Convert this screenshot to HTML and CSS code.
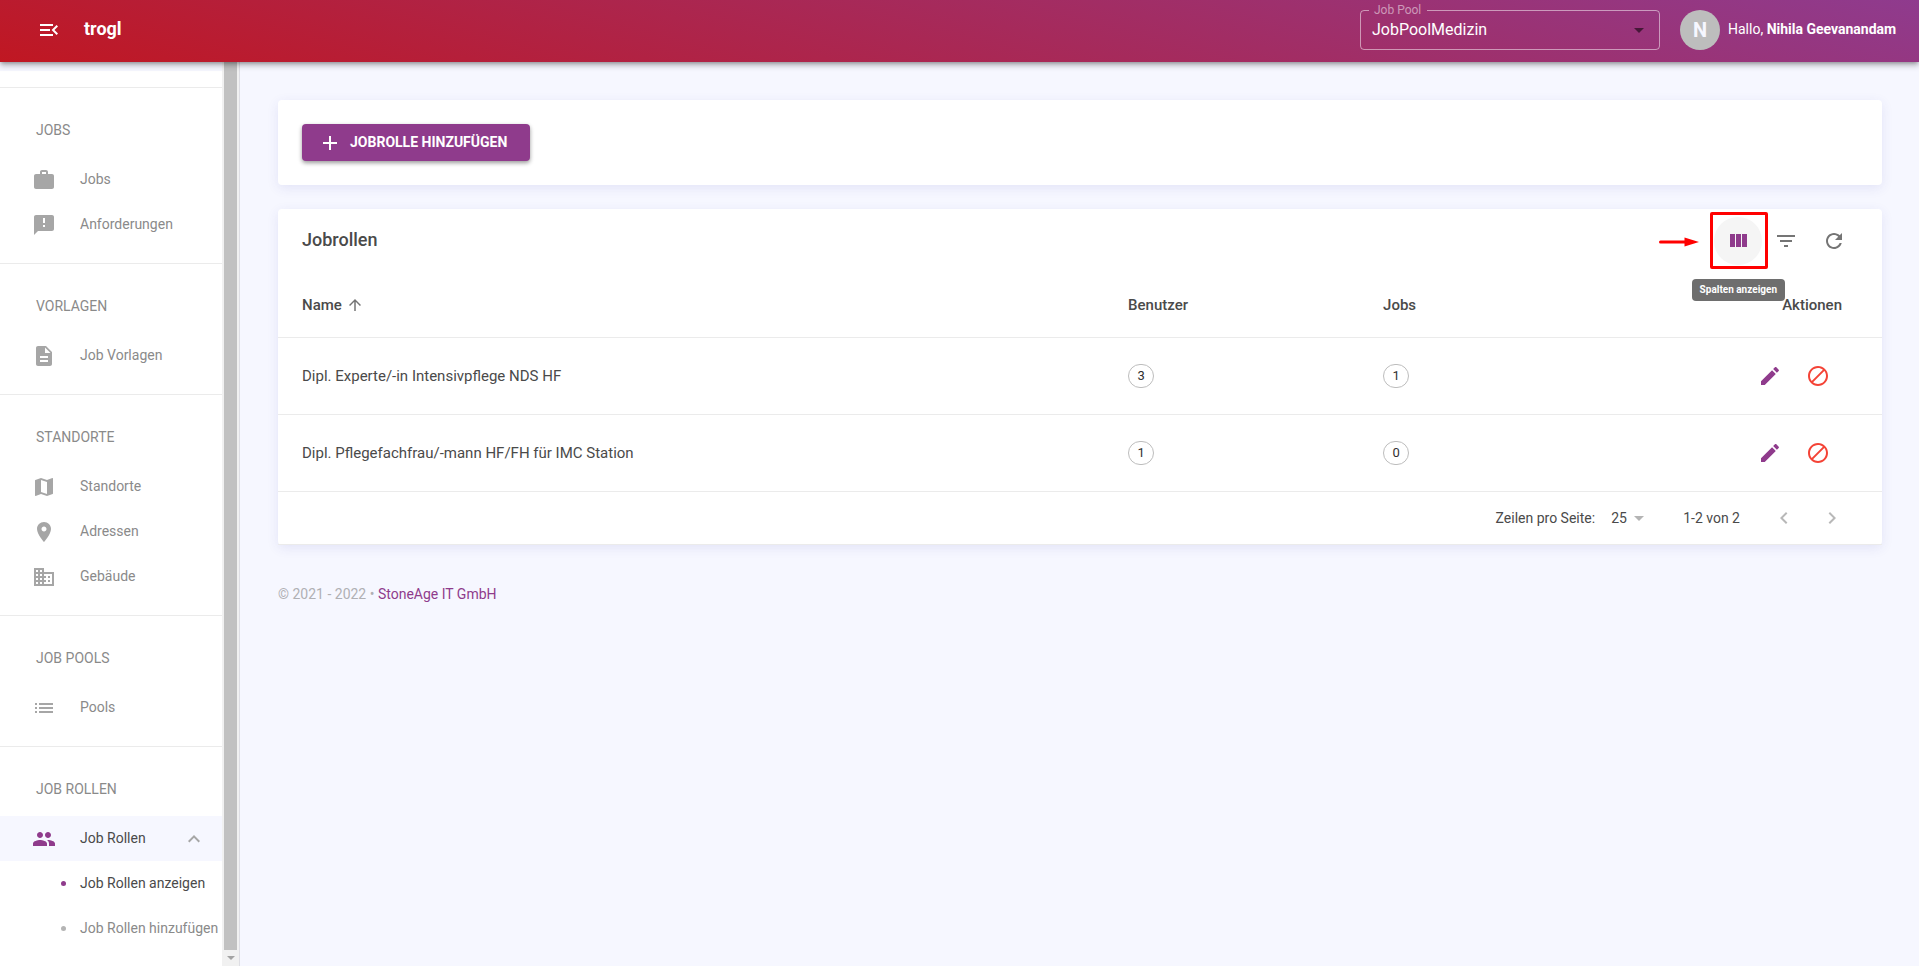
FILE: index.html
```html
<!DOCTYPE html>
<html lang="de">
<head>
<meta charset="utf-8">
<title>trogl – Jobrollen</title>
<link rel="stylesheet" href="styles.css">
</head>
<body>
<header class="topbar">
  <button class="menu-toggle" type="button" aria-label="Menü einklappen">
    <svg class="icon" viewBox="0 0 24 24"><path d="M3 18h13v-2H3v2zM3 13h10v-2H3v2zm0-7v2h13V6H3zm18 9.590L17.420 12 21 8.410 19.590 7l-5 5 5 5L21 15.590z"/></svg>
  </button>
  <a class="brand" href="#">trogl</a>
  <div class="topbar-right">
    <fieldset class="pool">
      <legend><label for="pool">Job Pool</label></legend>
      <div class="select-wrap">
        <select id="pool"><option>JobPoolMedizin</option></select>
        <svg class="icon caret" viewBox="0 0 24 24"><path d="M7 10l5 5 5-5z"/></svg>
      </div>
    </fieldset>
    <span class="avatar">N</span>
    <span class="greeting">Hallo, <strong>Nihila Geevanandam</strong></span>
  </div>
</header>
<div class="shell">
  <aside class="sidebar">
    <nav class="nav">
      <div class="section">
        <h2>Jobs</h2>
        <a href="#" class="item"><svg class="icon" viewBox="0 0 24 24"><path d="M20 6h-4V4c0-1.110-.89-2-2-2h-4c-1.110 0-2 .89-2 2v2H4c-1.110 0-1.990.89-1.990 2L2 19c0 1.110.89 2 2 2h16c1.110 0 2-.89 2-2V8c0-1.110-.89-2-2-2zm-6 0h-4V4h4v2z"/></svg><span>Jobs</span></a>
        <a href="#" class="item"><svg class="icon" viewBox="0 0 24 24"><path d="M20 2H4c-1.100 0-1.990.9-1.990 2L2 22l4-4h14c1.100 0 2-.9 2-2V4c0-1.100-.9-2-2-2zm-7 12h-2v-2h2v2zm0-4h-2V5h2v5z"/></svg><span>Anforderungen</span></a>
      </div>
      <div class="section">
        <h2>Vorlagen</h2>
        <a href="#" class="item"><svg class="icon" viewBox="0 0 24 24"><path d="M14 2H6c-1.100 0-1.990.9-1.990 2L4 20c0 1.100.89 2 1.990 2H18c1.100 0 2-.9 2-2V8l-6-6zm2 16H8v-2h8v2zm0-4H8v-2h8v2zm-3-5V3.500L18.500 9H13z"/></svg><span>Job Vorlagen</span></a>
      </div>
      <div class="section">
        <h2>Standorte</h2>
        <a href="#" class="item"><svg class="icon" viewBox="0 0 24 24"><path d="M20.500 3l-.16.030L15 5.100 9 3 3.360 4.900c-.21.070-.36.250-.36.480V20.500c0 .28.220.5.500.5l.16-.030L9 18.900l6 2.100 5.640-1.900c.21-.070.360-.250.360-.480V3.500c0-.28-.22-.5-.5-.5zM15 19l-6-2.110V5l6 2.110V19z"/></svg><span>Standorte</span></a>
        <a href="#" class="item"><svg class="icon" viewBox="0 0 24 24"><path d="M12 2C8.130 2 5 5.130 5 9c0 5.250 7 13 7 13s7-7.750 7-13c0-3.870-3.130-7-7-7zm0 9.500c-1.380 0-2.500-1.120-2.500-2.500s1.120-2.500 2.500-2.500 2.500 1.120 2.500 2.500-1.120 2.500-2.500 2.500z"/></svg><span>Adressen</span></a>
        <a href="#" class="item"><svg class="icon" viewBox="0 0 24 24"><path d="M12 7V3H2v18h20V7H12zM6 19H4v-2h2v2zm0-4H4v-2h2v2zm0-4H4V9h2v2zm0-4H4V5h2v2zm4 12H8v-2h2v2zm0-4H8v-2h2v2zm0-4H8V9h2v2zm0-4H8V5h2v2zm10 12h-8v-2h2v-2h-2v-2h2v-2h-2V9h8v10zm-2-8h-2v2h2v-2zm0 4h-2v2h2v-2z"/></svg><span>Gebäude</span></a>
      </div>
      <div class="section">
        <h2>Job Pools</h2>
        <a href="#" class="item"><svg class="icon" viewBox="0 0 24 24"><path d="M3 13h2v-2H3v2zm0 4h2v-2H3v2zm0-8h2V7H3v2zm4 4h14v-2H7v2zm0 4h14v-2H7v2zM7 7v2h14V7H7z"/></svg><span>Pools</span></a>
      </div>
      <div class="section">
        <h2>Job Rollen</h2>
        <a href="#" class="item open"><svg class="icon" viewBox="0 0 24 24"><path d="M16 11c1.660 0 2.990-1.340 2.990-3S17.660 5 16 5c-1.660 0-3 1.340-3 3s1.340 3 3 3zm-8 0c1.660 0 2.990-1.340 2.990-3S9.660 5 8 5C6.340 5 5 6.340 5 8s1.340 3 3 3zm0 2c-2.330 0-7 1.170-7 3.500V19h14v-2.500c0-2.330-4.670-3.500-7-3.500zm8 0c-.29 0-.62.020-.97.050 1.160.84 1.970 1.970 1.970 3.450V19h6v-2.500c0-2.330-4.670-3.500-7-3.500z"/></svg><span>Job Rollen</span><svg class="icon chevron" viewBox="0 0 24 24"><path d="M12 8l-6 6 1.410 1.410L12 10.830l4.590 4.580L18 14z"/></svg></a>
        <a href="#" class="item sub current"><span>Job Rollen anzeigen</span></a>
        <a href="#" class="item sub"><span>Job Rollen hinzufügen</span></a>
      </div>
    </nav>
    <div class="scrollbar" aria-hidden="true">
      <div class="thumb"></div>
      <div class="scroll-end"><svg viewBox="0 0 8 4"><path d="M0 0h8L4 4z"/></svg></div>
    </div>
  </aside>
  <main class="content">
    <section class="card actions">
      <button class="add" type="button"><svg class="icon" viewBox="0 0 24 24"><path d="M19 13h-6v6h-2v-6H5v-2h6V5h2v6h6v2z"/></svg><span>Jobrolle hinzufügen</span></button>
    </section>
    <section class="card">
      <div class="toolbar">
        <h1>Jobrollen</h1>
        <div class="marked">
          <button class="icon-btn hovered" type="button" aria-label="Spalten anzeigen" aria-describedby="tip"><svg class="icon" viewBox="0 0 24 24"><path d="M10 18h5V5h-5v13zm-6 0h5V5H4v13zM16 5v13h5V5h-5z"/></svg></button>
          <span class="frame"></span>
          <svg class="arrow" viewBox="0 0 40 10"><path d="M1.500 5H28" stroke="#f00" stroke-width="3" stroke-linecap="round"/><path d="M25.500.5L40 5 25.500 9.500z" fill="#f00"/></svg>
          <span class="tooltip" id="tip" role="tooltip">Spalten anzeigen</span>
        </div>
        <button class="icon-btn" type="button" aria-label="Filter"><svg class="icon" viewBox="0 0 24 24"><path d="M10 18h4v-2h-4v2zM3 6v2h18V6H3zm3 7h12v-2H6v2z"/></svg></button>
        <button class="icon-btn" type="button" aria-label="Aktualisieren"><svg class="icon" viewBox="0 0 24 24"><path d="M17.650 6.350C16.200 4.900 14.210 4 12 4c-4.420 0-7.990 3.580-7.990 8s3.570 8 7.990 8c3.730 0 6.840-2.550 7.730-6h-2.080c-.82 2.330-3.040 4-5.650 4-3.310 0-6-2.690-6-6s2.690-6 6-6c1.660 0 3.140.69 4.220 1.780L13 11h7V4l-2.350 2.350z"/></svg></button>
      </div>
      <table class="roles">
        <thead>
          <tr>
            <th class="col-name" aria-sort="ascending"><span class="sort">Name<svg class="icon" viewBox="0 0 24 24"><path d="M4 12l1.410 1.410L11 7.830V20h2V7.830l5.580 5.590L20 12l-8-8-8 8z"/></svg></span></th>
            <th class="col-count">Benutzer</th>
            <th class="col-count">Jobs</th>
            <th class="col-actions">Aktionen</th>
          </tr>
        </thead>
        <tbody>
          <tr>
            <td>Dipl. Experte/-in Intensivpflege NDS HF</td>
            <td><span class="chip">3</span></td>
            <td><span class="chip">1</span></td>
            <td><div class="row-actions">
              <button class="icon-btn edit" type="button" aria-label="Bearbeiten"><svg class="icon" viewBox="0 0 24 24"><path d="M3 17.250V21h3.750L17.810 9.940l-3.750-3.750L3 17.250zM20.710 7.040c.39-.39.39-1.020 0-1.410l-2.340-2.340c-.39-.39-1.020-.39-1.410 0l-1.830 1.830 3.750 3.750 1.830-1.830z"/></svg></button>
              <button class="icon-btn block" type="button" aria-label="Deaktivieren"><svg class="icon" viewBox="0 0 24 24"><path d="M12 2C6.480 2 2 6.480 2 12s4.480 10 10 10 10-4.480 10-10S17.520 2 12 2zM4 12c0-4.420 3.580-8 8-8 1.850 0 3.550.63 4.900 1.690L5.690 16.900C4.630 15.550 4 13.850 4 12zm8 8c-1.850 0-3.550-.63-4.900-1.690L18.310 7.100C19.370 8.450 20 10.150 20 12c0 4.420-3.580 8-8 8z"/></svg></button>
            </div></td>
          </tr>
          <tr>
            <td>Dipl. Pflegefachfrau/-mann HF/FH für IMC Station</td>
            <td><span class="chip">1</span></td>
            <td><span class="chip">0</span></td>
            <td><div class="row-actions">
              <button class="icon-btn edit" type="button" aria-label="Bearbeiten"><svg class="icon" viewBox="0 0 24 24"><path d="M3 17.250V21h3.750L17.810 9.940l-3.750-3.750L3 17.250zM20.710 7.040c.39-.39.39-1.020 0-1.410l-2.340-2.340c-.39-.39-1.020-.39-1.410 0l-1.830 1.830 3.750 3.750 1.830-1.830z"/></svg></button>
              <button class="icon-btn block" type="button" aria-label="Deaktivieren"><svg class="icon" viewBox="0 0 24 24"><path d="M12 2C6.480 2 2 6.480 2 12s4.480 10 10 10 10-4.480 10-10S17.520 2 12 2zM4 12c0-4.420 3.580-8 8-8 1.850 0 3.550.63 4.900 1.690L5.690 16.900C4.630 15.550 4 13.850 4 12zm8 8c-1.850 0-3.550-.63-4.900-1.690L18.310 7.100C19.370 8.450 20 10.150 20 12c0 4.420-3.580 8-8 8z"/></svg></button>
            </div></td>
          </tr>
        </tbody>
      </table>
      <div class="pagination">
        <label for="rows">Zeilen pro Seite:</label>
        <div class="select-wrap rows">
          <select id="rows"><option>25</option></select>
          <svg class="icon caret" viewBox="0 0 24 24"><path d="M7 10l5 5 5-5z"/></svg>
        </div>
        <span class="range">1-2 von 2</span>
        <button class="icon-btn pager" type="button" aria-label="Vorherige Seite" disabled><svg class="icon" viewBox="0 0 24 24"><path d="M15.410 7.410L14 6l-6 6 6 6 1.410-1.410L10.830 12z"/></svg></button>
        <button class="icon-btn pager" type="button" aria-label="Nächste Seite" disabled><svg class="icon" viewBox="0 0 24 24"><path d="M10 6L8.590 7.410 13.170 12l-4.580 4.590L10 18l6-6z"/></svg></button>
      </div>
    </section>
    <footer class="legal">© 2021 - 2022 • <a href="#">StoneAge IT GmbH</a></footer>
  </main>
</div>
</body>
</html>
```

FILE: styles.css
```css
:root {
  --accent: #8f3b8c;
  --surface: #f6f7ff;
  --text: #4a4a4a;
  --muted: #8a8a8a;
  --line: #ebebeb;
}

* {
  box-sizing: border-box;
}

body {
  margin: 0;
  height: 100vh;
  display: flex;
  flex-direction: column;
  overflow: hidden;
  background: var(--surface);
  color: var(--text);
  font-family: Roboto, "Liberation Sans", sans-serif;
  font-size: 14px;
}

button,
select {
  font: inherit;
  color: inherit;
  border: 0;
  background: none;
  padding: 0;
}

a {
  color: inherit;
  text-decoration: none;
}

.icon {
  width: 24px;
  height: 24px;
  flex: none;
  display: block;
  fill: currentColor;
}

.topbar {
  flex: none;
  height: 62px;
  padding: 0 19px 2px 37px;
  display: flex;
  align-items: center;
  gap: 23px;
  position: relative;
  z-index: 2;
  color: #fff;
  background: linear-gradient(15deg, #c01722 0%, #8f3b8e 100%);
  box-shadow: 0 2px 4px -1px rgba(0, 0, 0, 0.3), 0 4px 6px rgba(0, 0, 0, 0.2);
}

.menu-toggle {
  height: 24px;
}

.brand {
  font-size: 18px;
  font-weight: 700;
  line-height: 24px;
  padding-bottom: 2px;
}

.topbar-right {
  margin-left: auto;
  height: 100%;
  padding-bottom: 10px;
  display: flex;
  align-items: flex-end;
}

.pool {
  width: 300px;
  height: 46px;
  margin: 0 20px 0 0;
  padding: 0 8px;
  border: 1px solid rgba(255, 255, 255, 0.5);
  border-radius: 4px;
}

.pool legend {
  padding: 0 6px 0 5px;
  font-size: 12px;
  line-height: 12px;
  color: rgba(255, 255, 255, 0.5);
}

.select-wrap {
  display: flex;
  align-items: center;
}

.select-wrap select {
  appearance: none;
  width: 100%;
  cursor: pointer;
}

.select-wrap .caret {
  margin-left: -24px;
  pointer-events: none;
}

.pool .select-wrap {
  height: 28px;
}

.pool select {
  font-size: 16px;
  line-height: 28px;
  padding-left: 3px;
}

.pool .caret {
  color: rgba(0, 0, 0, 0.54);
}

.avatar {
  width: 40px;
  height: 40px;
  margin-right: 8px;
  border-radius: 50%;
  background: #bdbdbd;
  color: var(--surface);
  font-size: 20px;
  font-weight: 700;
  line-height: 40px;
  text-align: center;
}

.greeting {
  min-width: 172px;
  line-height: 38px;
  padding-bottom: 2px;
}

.shell {
  flex: 1;
  min-height: 0;
  display: flex;
}

.sidebar {
  flex: none;
  width: 240px;
  padding-top: 9px;
  display: flex;
  border-right: 1px solid #dedee4;
}

.nav {
  flex: 1;
  min-width: 0;
  padding: 16px 0 15px;
  background: #fff;
  overflow: hidden;
  color: var(--muted);
}

.section {
  border-top: 1px solid var(--line);
  padding-bottom: 16px;
}

.section h2 {
  margin: 0;
  padding: 32px 36px 17px;
  font-size: 14px;
  font-weight: 400;
  line-height: 20px;
  text-transform: uppercase;
}

.item {
  height: 45px;
  padding: 0 16px 0 32px;
  display: flex;
  align-items: center;
  gap: 24px;
  white-space: nowrap;
}

.item span,
.add span {
  padding-bottom: 2px;
}

.item .icon {
  color: #a6a6a6;
}

.open {
  background: var(--surface);
  color: var(--text);
}

.open .icon:first-child {
  color: var(--accent);
}

.item .chevron {
  margin-left: auto;
}

.sub {
  padding: 0 0 0 61px;
  gap: 14px;
}

.sub::before {
  content: "";
  width: 5px;
  height: 5px;
  border-radius: 50%;
  background: #b4b4b4;
}

.current {
  color: var(--text);
}

.current::before {
  background: var(--accent);
}

.scrollbar {
  flex: none;
  width: 17px;
  margin-top: -9px;
  padding: 0 2px;
  display: flex;
  flex-direction: column;
  background: #f1f1f1;
}

.thumb {
  flex: 1;
  background: #c1c1c1;
}

.scroll-end {
  height: 16px;
  display: grid;
  place-items: center;
}

.scroll-end svg {
  width: 8px;
  height: 4px;
  fill: #a3a3a3;
}

.content {
  flex: 1;
  min-width: 0;
  padding: 38px 37px 24px 38px;
}

.card {
  margin-bottom: 24px;
  background: #fff;
  border-radius: 4px;
  box-shadow: 0 3px 12px rgba(60, 60, 180, 0.1);
}

.actions {
  padding: 24px;
}

.add {
  min-width: 228px;
  height: 37px;
  padding: 0 16px;
  display: flex;
  align-items: center;
  gap: 8px;
  border-radius: 4px;
  background: var(--accent);
  color: #fff;
  font-weight: 700;
  text-transform: uppercase;
  box-shadow: 0 2px 4px rgba(0, 0, 0, 0.4);
}

.toolbar {
  height: 64px;
  padding: 0 24px;
  display: flex;
  align-items: center;
}

.toolbar h1 {
  margin: 0 auto 0 0;
  padding-bottom: 2px;
  font-size: 18px;
  font-weight: 500;
  line-height: 24px;
}

.icon-btn {
  width: 48px;
  height: 48px;
  display: grid;
  place-items: center;
  border-radius: 50%;
  color: #757575;
}

.hovered {
  background: #f5f5f5;
  color: var(--accent);
}

.marked {
  position: relative;
}

.frame {
  position: absolute;
  inset: -5px -6px -4px -4px;
  border: 3px solid #f00;
  border-radius: 2px;
}

.arrow {
  position: absolute;
  left: -55px;
  top: 20px;
  width: 40px;
  height: 10px;
}

.tooltip {
  position: absolute;
  top: 62px;
  right: -23px;
  padding: 0 8px;
  border-radius: 4px;
  background: #6e6e6e;
  color: #fff;
  font-size: 10px;
  font-weight: 700;
  line-height: 22px;
  white-space: nowrap;
}

.roles {
  width: 100%;
  border-collapse: collapse;
  table-layout: fixed;
  font-size: 15px;
}

.roles th,
.roles td {
  padding: 0 24px;
  border-bottom: 1px solid var(--line);
  text-align: left;
}

.roles th {
  height: 64px;
  font-weight: 500;
}

.roles td {
  height: 77px;
}

.roles .col-name {
  width: 51.5%;
}

.roles .col-count {
  width: 15.9%;
}

.roles .col-actions {
  padding-right: 40px;
  text-align: right;
}

.sort {
  display: flex;
  align-items: center;
  gap: 4px;
}

.sort .icon {
  width: 18px;
  height: 18px;
  color: #757575;
}

.chip {
  width: 26px;
  height: 24px;
  display: grid;
  place-items: center;
  border: 1px solid #bdbdbd;
  border-radius: 12px;
  font-size: 13px;
  color: #303030;
}

.row-actions {
  display: flex;
  justify-content: flex-end;
  margin-right: 16px;
}

.edit {
  color: var(--accent);
}

.block {
  color: #f44336;
}

.pagination {
  height: 53px;
  padding: 0 26px;
  display: flex;
  align-items: center;
  justify-content: flex-end;
  border-bottom: 1px solid var(--line);
}

.rows {
  width: 40px;
  margin: 0 32px 0 16px;
}

.rows .caret {
  color: #b4b4b4;
}

.range {
  margin-right: 20px;
}

.pager {
  color: #b8b8b8;
}

.legal {
  padding-top: 15px;
  font-size: 14px;
  line-height: 20px;
  color: #b0b0b4;
}

.legal a {
  color: var(--accent);
}
```
